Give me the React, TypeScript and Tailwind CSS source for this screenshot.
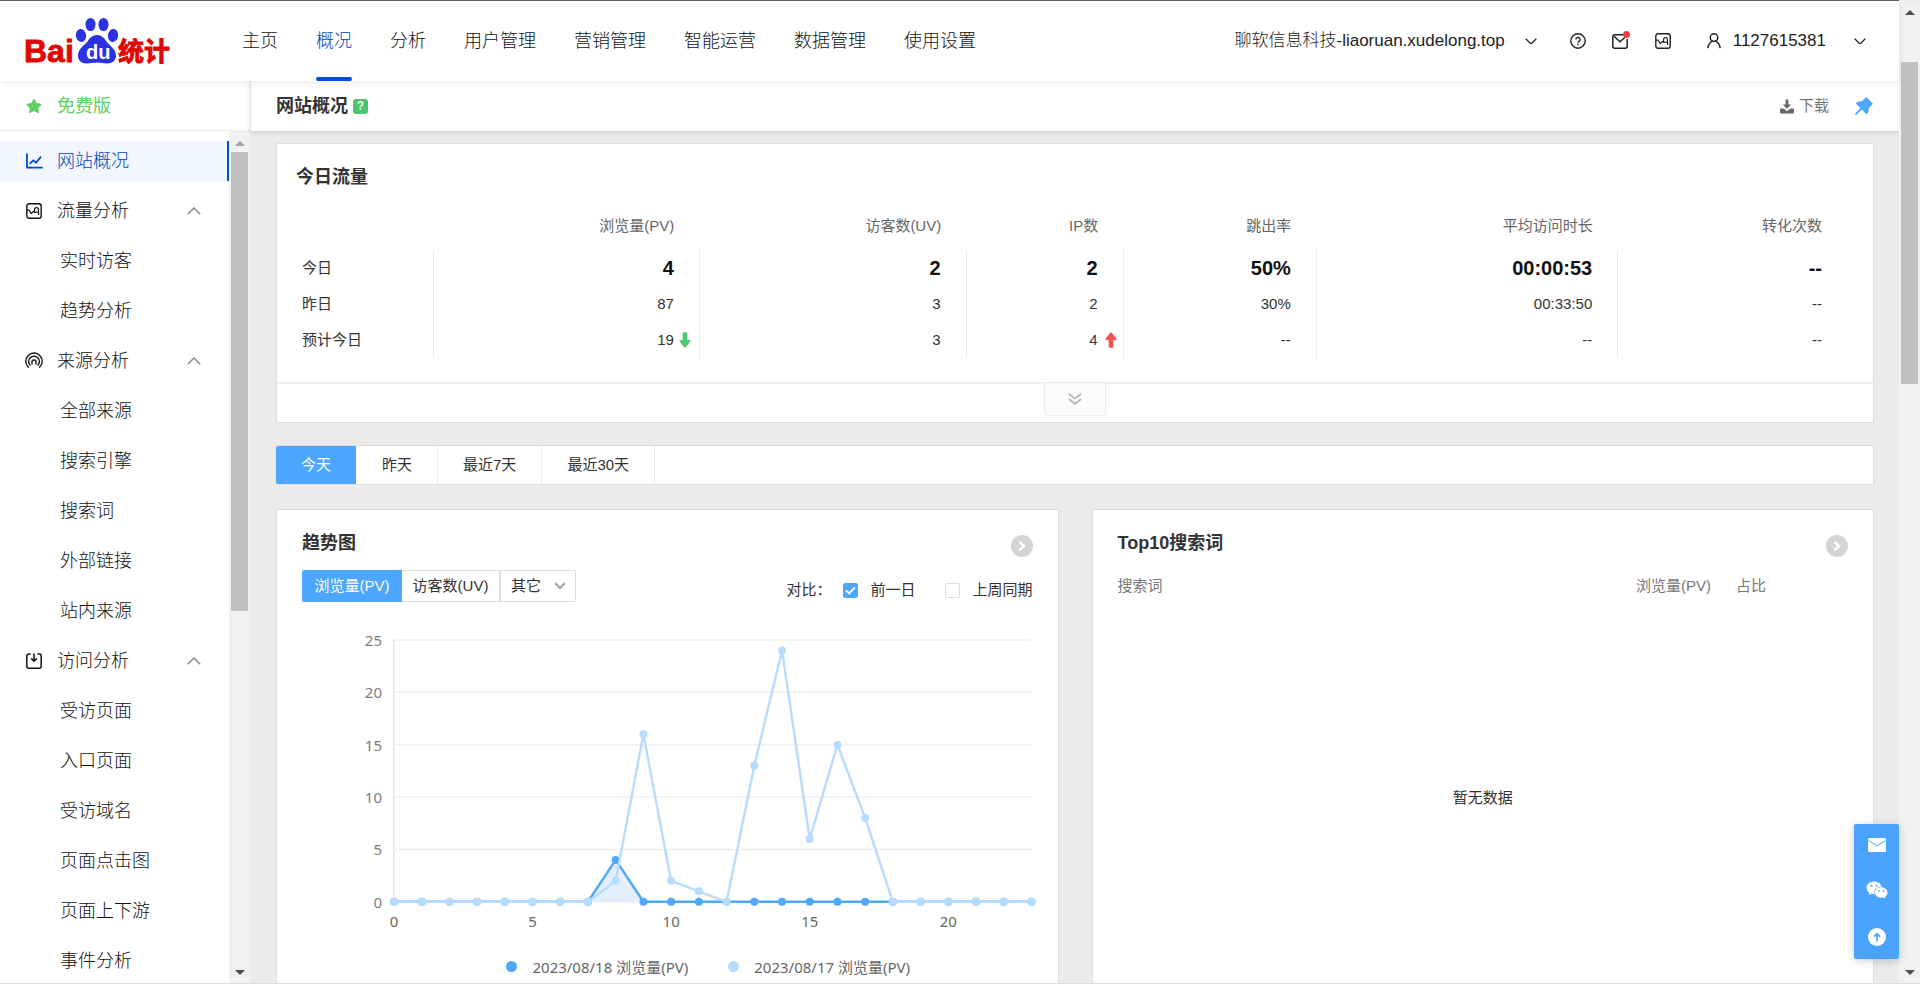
import { Fragment } from "react";
import type { ReactNode } from "react";
import { FaStar } from "react-icons/fa";
import { AiFillPushpin, AiFillWechat } from "react-icons/ai";

type TIconProps = {
  className?: string;
};

const navItems = [
  "主页",
  "概况",
  "分析",
  "用户管理",
  "营销管理",
  "智能运营",
  "数据管理",
  "使用设置",
];

const ChartBoxIcon = ({ className }: TIconProps) => (
  <svg viewBox="0 0 16 16" fill="none" stroke="currentColor" className={className}>
    <rect x="0.8" y="0.8" width="14.4" height="14.4" rx="2.2" strokeWidth="1.4" />
    <path
      d="M1 7.2h2.2l2 3.4 2.2-2.2 1.2 1 4-0.4v3M8.6 8.8V6.6a1.9 1.9 0 0 1 3.8 0v2.6"
      strokeWidth="1.2"
      strokeLinejoin="round"
    />
  </svg>
);

const LineChartIcon = ({ className }: TIconProps) => (
  <svg viewBox="0 0 17 17" fill="none" stroke="currentColor" strokeWidth="1.8" className={className}>
    <path d="M1 0.5v14.2h15.6" strokeLinejoin="round" />
    <path d="M3.6 10.8l3.6-3.4 2.8 2.4 5-6.2" />
  </svg>
);

const SourceIcon = ({ className }: TIconProps) => (
  <svg viewBox="0 0 18 18" fill="none" stroke="currentColor" strokeWidth="1.4" className={className}>
    <path d="M3.8 15.6a8.2 8.2 0 1 1 10.4 0" />
    <path d="M5.4 13.6a5.4 5.4 0 1 1 7.2 0" />
    <path d="M7 12.4v-1.8a2.1 2.1 0 1 1 4 0v1.8" />
  </svg>
);

const VisitIcon = ({ className }: TIconProps) => (
  <svg viewBox="0 0 16 16" fill="none" stroke="currentColor" strokeWidth="1.5" className={className}>
    <path d="M4.6 0.9H2.8a2 2 0 0 0-2 2v10.3a2 2 0 0 0 2 2h10.400a2 2 0 0 0 2-2V2.900a2 2 0 0 0-2-2h-1.800" />
    <path d="M8 0.4v7.4M5.2 5.4L8 8.2l2.8-2.8" />
  </svg>
);

const ChevronIcon = ({ className }: TIconProps) => (
  <svg viewBox="0 0 14 8" fill="none" stroke="currentColor" strokeWidth="1.5" className={className}>
    <path d="M0.8 0.8L7 7l6.2-6.2" />
  </svg>
);

const menus = [
  {
    title: "流量分析",
    icon: <ChartBoxIcon className="size-4" />,
    children: ["实时访客", "趋势分析"],
  },
  {
    title: "来源分析",
    icon: <SourceIcon className="size-[18px]" />,
    children: ["全部来源", "搜索引擎", "搜索词", "外部链接", "站内来源"],
  },
  {
    title: "访问分析",
    icon: <VisitIcon className="size-4" />,
    children: [
      "受访页面",
      "入口页面",
      "受访域名",
      "页面点击图",
      "页面上下游",
      "事件分析",
    ],
  },
];

const columns = [
  { title: "浏览量(PV)", today: "4", yesterday: "87", predict: "19", trend: "down" },
  { title: "访客数(UV)", today: "2", yesterday: "3", predict: "3" },
  { title: "IP数", today: "2", yesterday: "2", predict: "4", trend: "up" },
  { title: "跳出率", today: "50%", yesterday: "30%", predict: "--" },
  { title: "平均访问时长", today: "00:00:53", yesterday: "00:33:50", predict: "--" },
  { title: "转化次数", today: "--", yesterday: "--", predict: "--" },
];

const todayData = [0, 0, 0, 0, 0, 0, 0, 0, 4, 0, 0, 0, 0, 0, 0, 0, 0, 0, 0, 0, 0, 0, 0, 0];
const yesterdayData = [0, 0, 0, 0, 0, 0, 0, 0, 2, 16, 2, 1, 0, 13, 24, 6, 15, 8, 0, 0, 0, 0, 0, 0];

const Logo = () => (
  <svg viewBox="0 -6 150 64" className="h-16 w-[150px]" role="img" aria-label="百度统计">
    <text x="-1" y="47" fill="#e10602" className="font-['Liberation_Sans',sans-serif] text-[32px] font-bold" stroke="#e10602" strokeWidth="0.8">
      Bai
    </text>
    <g fill="#2a32e2">
      <ellipse cx="65.5" cy="9.5" rx="5" ry="6.6" />
      <ellipse cx="78.5" cy="9.5" rx="5" ry="6.6" />
      <ellipse cx="56" cy="20.5" rx="5.1" ry="6.6" transform="rotate(-8 56 20.5)" />
      <ellipse cx="88" cy="20.5" rx="5.1" ry="6.6" transform="rotate(8 88 20.5)" />
      <path d="M72 20c4.500 0 7.500 3 9.500 6.500 2 3.500 9.500 7 9.500 14 0 5-4 8-8.500 8-4 0-7-1-10.500-1s-6.500 1-10.500 1c-5 0-8.500-3-8.500-8 0-7 7-10.500 9.500-14C64.500 23 67.500 20 72 20z" />
    </g>
    <text x="61" y="44" fill="#fff" className="font-['Liberation_Sans',sans-serif] text-[20px] font-bold">
      du
    </text>
    <text x="93" y="46" fill="#e10602" stroke="#e10602" strokeWidth="0.8" className="font-['Noto_Sans_CJK_SC',sans-serif] text-[26px] font-bold">
      统计
    </text>
  </svg>
);

const Header = () => (
  <header className="relative z-10 flex h-[81px] shrink-0 items-center border-t border-[#606066] bg-white pr-[33px] pl-[25px] text-lg font-light text-[#111] shadow-[0_2px_6px_rgba(0,0,0,0.08)]">
    <a href="#" className="mr-[67px]">
      <Logo />
    </a>
    <nav className="flex h-full gap-[38px]">
      {navItems.map((item) => (
        <a
          key={item}
          href="#"
          className={
            item === "概况"
              ? "relative flex items-center text-[#0048c0] after:absolute after:inset-x-0 after:bottom-0 after:h-1 after:rounded-xs after:bg-[#0052cc]"
              : "flex items-center"
          }
        >
          {item}
        </a>
      ))}
    </nav>
    <div className="ml-auto flex items-center text-[17px] text-[#222]">
      <button type="button" className="flex items-center gap-5">
        聊软信息科技-liaoruan.xudelong.top
        <ChevronIcon className="w-3" />
      </button>
      <button type="button" aria-label="帮助" className="ml-[33px]">
        <svg viewBox="0 0 16 16" fill="none" stroke="currentColor" strokeWidth="1.4" className="size-4">
          <circle cx="8" cy="8" r="7.2" />
          <path d="M5.900 6.600a2.100 2.100 0 1 1 3.100 1.800c-.7.400-1 .7-1 1.400M8 10.800v1.500" />
        </svg>
      </button>
      <button type="button" aria-label="消息" className="relative ml-[26px]">
        <svg viewBox="0 0 16 16" fill="none" stroke="currentColor" strokeWidth="1.5" className="size-4">
          <path d="M11 1.800H2.800a2 2 0 0 0-2 2v9.400a2 2 0 0 0 2 2h10.400a2 2 0 0 0 2-2V6" />
          <path d="M2 3.200l6 5.600 5-4.600" />
        </svg>
        <span className="absolute -top-0.5 -right-0.5 size-[7px] rounded-full bg-[#f33e3e]" />
      </button>
      <button type="button" aria-label="报告" className="ml-[27px]">
        <ChartBoxIcon className="size-4" />
      </button>
      <button type="button" className="ml-9 flex items-center">
        <svg viewBox="0 0 14 16" fill="none" stroke="currentColor" strokeWidth="1.5" className="mr-3 h-4 w-3.5">
          <circle cx="7" cy="4.600" r="3.800" />
          <path d="M0.900 15.200c.4-3.600 2.200-5.800 4.600-7M13.100 15.200c-.4-3.600-2.200-5.800-4.600-7" />
        </svg>
        1127615381
        <ChevronIcon className="ml-7 w-3" />
      </button>
    </div>
  </header>
);

const Sidebar = () => (
  <aside className="flex w-[250px] shrink-0 flex-col bg-white text-lg font-light text-[#111]">
    <a href="#" className="flex h-[50px] shrink-0 items-center border-b border-[#ebebeb] font-normal text-[#5ed166]">
      <span className="flex w-[57px] justify-center pl-[11px]">
        <FaStar className="size-4" />
      </span>
      免费版
    </a>
    <div className="flex min-h-0 flex-1">
      <nav className="flex-1 overflow-hidden pt-2.5">
        <a href="#" className="mb-2.5 flex h-10 items-center border-r-2 border-[#0052cc] bg-[#f2f6fe] text-[#0048c0]">
          <span className="flex w-[57px] justify-center pl-[11px]">
            <LineChartIcon className="size-[17px]" />
          </span>
          网站概况
        </a>
        {menus.map((menu) => (
          <Fragment key={menu.title}>
            <button type="button" className="mb-2.5 flex h-10 w-full items-center">
              <span className="flex w-[57px] justify-center pl-[11px]">{menu.icon}</span>
              {menu.title}
              <ChevronIcon className="mr-7 ml-auto w-3.5 rotate-180 text-[#868b9a]" />
            </button>
            {menu.children.map((child) => (
              <a key={child} href="#" className="mb-2.5 flex h-10 items-center pl-[60px]">
                {child}
              </a>
            ))}
          </Fragment>
        ))}
      </nav>
      <div className="flex w-[21px] flex-col items-center justify-between bg-[#f1f1f1] pt-2.5 pb-2">
        <span className="border-x-[5px] border-b-[5px] border-transparent border-b-[#a3a3a3]" />
        <span className="mt-1.5 mb-auto h-[55%] w-[17px] bg-[#c1c1c1]" />
        <span className="border-x-[5px] border-t-[5px] border-transparent border-t-[#505050]" />
      </div>
    </div>
  </aside>
);

const TrendArrow = ({ trend }: { trend?: string }) => {
  if (!trend) return null;
  return (
    <svg
      viewBox="0 0 12 16"
      className={
        trend === "up"
          ? "absolute top-2.5 right-1.5 h-4 w-3 text-[#f5524c]"
          : "absolute top-2.5 right-2 h-4 w-3 rotate-180 text-[#4dc96d]"
      }
    >
      <path
        d="M5.300 0.800q.7-.7 1.400 0L11.300 6.600a.9.900 0 0 1-.7 1.500H8.300v6.300a1.300 1.300 0 0 1-1.300 1.300H5a1.300 1.300 0 0 1-1.300-1.300V8.100H1.400a.9.900 0 0 1-.7-1.500z"
        fill="currentColor"
      />
    </svg>
  );
};

const TodayTraffic = () => (
  <section className="border border-[#dedede] bg-white">
    <h2 className="px-[19px] pt-[19px] text-lg leading-7 font-bold text-[#333]">今日流量</h2>
    <div className="mt-3 mb-6 pr-[26px]">
      <table className="w-full table-fixed text-right text-[15px] text-[#333]">
        <colgroup>
          <col className="w-[10%]" />
          <col className="w-[16.9%]" />
          <col className="w-[17%]" />
          <col className="w-[10%]" />
          <col className="w-[12.3%]" />
          <col className="w-[19.2%]" />
          <col className="w-[14.6%]" />
        </colgroup>
        <thead>
          <tr className="h-[47px] text-[#666]">
            <td />
            {columns.map((col) => (
              <th key={col.title} scope="col" className="pr-[25px] font-normal">
                {col.title}
              </th>
            ))}
          </tr>
        </thead>
        <tbody className="[&_td]:border-r [&_td]:border-[#ebebeb] [&_td]:pr-[25px] [&_td:last-child]:border-0 [&_th]:border-r [&_th]:border-[#ebebeb] [&_th]:pl-[25px] [&_th]:text-left [&_th]:font-normal">
          <tr className="h-9">
            <th scope="row">今日</th>
            {columns.map((col) => (
              <td key={col.title} className="text-xl leading-7 font-bold text-[#111]">
                {col.today}
              </td>
            ))}
          </tr>
          <tr className="h-9">
            <th scope="row">昨日</th>
            {columns.map((col) => (
              <td key={col.title}>{col.yesterday}</td>
            ))}
          </tr>
          <tr className="h-9">
            <th scope="row">预计今日</th>
            {columns.map((col) => (
              <td key={col.title} className="relative">
                {col.predict}
                <TrendArrow trend={col.trend} />
              </td>
            ))}
          </tr>
        </tbody>
      </table>
    </div>
    <div className="flex h-10 items-start justify-center border-t-2 border-[#f0f0f0]">
      <button
        type="button"
        aria-label="展开"
        className="-mt-0.5 flex h-[34px] w-[62px] items-center justify-center rounded-b-sm border border-[#ebebeb] bg-[#fafcfc] text-[#b5b8ba]"
      >
        <svg viewBox="0 0 14 12" fill="none" stroke="currentColor" strokeWidth="1.8" className="h-3 w-3.5">
          <path d="M0.800 0.800L7 5.600l6.200-4.800M0.800 6L7 10.800 13.200 6" />
        </svg>
      </button>
    </div>
  </section>
);

const DateTabs = () => (
  <div className="mt-[22px] flex h-10 border-y border-r border-[#dedede] bg-white text-[15px] text-[#333]">
    {["今天", "昨天", "最近7天", "最近30天"].map((tab) => (
      <button
        key={tab}
        type="button"
        className={
          tab === "今天"
            ? "mr-px rounded-l-xs bg-[#4da6ff] px-[25px] text-white"
            : "border-r border-[#ebebeb] px-[25px]"
        }
      >
        {tab}
      </button>
    ))}
  </div>
);

const Card = ({ title, children }: { title: string; children: ReactNode }) => (
  <section className="flex min-h-[520px] flex-col rounded-xs border border-[#dedede] bg-white px-[25px] pt-[19px] pb-6">
    <div className="flex items-end justify-between">
      <h2 className="text-lg leading-7 font-bold text-[#333]">{title}</h2>
      <button type="button" aria-label="更多" className="flex size-[22px] items-center justify-center rounded-full bg-[#d3d4d6]">
        <svg viewBox="0 0 8 10" fill="none" stroke="#fff" strokeWidth="2.400" strokeLinecap="round" strokeLinejoin="round" className="h-2.5 w-2">
          <path d="M2 1.400L6 5 2 8.600" />
        </svg>
      </button>
    </div>
    {children}
  </section>
);

const getX = (i: number) => 92 + (i * 638) / 23;
const getY = (v: number) => 282 - (v * 262) / 25;
const getPoints = (data: number[]) => data.map((v, i) => `${getX(i)},${getY(v)}`).join(" ");

const TrendChart = () => (
  <svg viewBox="0 0 731 320" className="mt-[18px] w-full overflow-visible font-['Noto_Sans','Noto_Sans_CJK_SC',sans-serif] text-[15px]">
    {[25, 20, 15, 10, 5, 0].map((v) => (
      <Fragment key={v}>
        <path d={`M92 ${getY(v)}H730`} stroke="#f0f0f0" strokeWidth="1.500" />
        <text x="80" y={getY(v) + 6} textAnchor="end" fill="#7d7d7d">
          {v}
        </text>
      </Fragment>
    ))}
    <path d="M92 20V282" stroke="#e3e3e3" strokeWidth="1.500" />
    {[0, 5, 10, 15, 20].map((v) => (
      <text key={v} x={getX(v)} y="307" textAnchor="middle" fill="#666">
        {v}
      </text>
    ))}
    <polygon points={`${getX(7)},282 ${getX(8)},${getY(4)} ${getX(9)},282`} fill="#e3effc" />
    <polyline points={getPoints(todayData)} fill="none" stroke="#4fa8f9" strokeWidth="2.500" />
    {todayData.map((v, i) => (
      <circle key={i} cx={getX(i)} cy={getY(v)} r="4" fill="#4fa8f9" />
    ))}
    <polyline points={getPoints(yesterdayData)} fill="none" stroke="#b8dcff" strokeWidth="2.400" />
    {yesterdayData.map((v, i) => (
      <circle key={i} cx={getX(i)} cy={getY(v)} r="4" fill="#b8dcff" />
    ))}
  </svg>
);

const CompareBox = ({ id, label, checked }: { id: string; label: string; checked?: boolean }) => (
  <span className="flex items-center gap-3">
    <span className="relative flex size-[15px]">
      <input
        id={id}
        type="checkbox"
        defaultChecked={checked}
        className="peer size-[15px] appearance-none rounded-xs border border-[#dedede] bg-white checked:border-[#4da6ff] checked:bg-[#4da6ff]"
      />
      <svg
        viewBox="0 0 15 15"
        fill="none"
        stroke="#fff"
        strokeWidth="2"
        className="pointer-events-none absolute inset-0 hidden size-[15px] peer-checked:block"
      >
        <path d="M3 7.400l3 3 6-6" />
      </svg>
    </span>
    <label htmlFor={id}>{label}</label>
  </span>
);

const TrendCard = () => (
  <Card title="趋势图">
    <div className="mt-[13px] flex items-end justify-between text-[15px] text-[#333]">
      <div className="flex h-8">
        <button type="button" className="w-[100px] rounded-l-xs bg-[#4da6ff] text-white">
          浏览量(PV)
        </button>
        <button type="button" className="w-[98px] border-y border-r border-[#dedede]">
          访客数(UV)
        </button>
        <span className="relative">
          <select aria-label="其它指标" className="h-8 w-[76px] appearance-none rounded-r-xs border border-[#dedede] pl-2.5">
            <option>其它</option>
          </select>
          <svg
            viewBox="0 0 12 8"
            fill="none"
            stroke="#a8abad"
            strokeWidth="2.400"
            className="pointer-events-none absolute top-3 right-2.5 h-2 w-3"
          >
            <path d="M1 1l5 5 5-5" />
          </svg>
        </span>
      </div>
      <div className="flex items-center gap-[30px] leading-6">
        <span className="flex items-center gap-3">
          对比：
          <CompareBox id="prev-day" label="前一日" checked />
        </span>
        <CompareBox id="last-week" label="上周同期" />
      </div>
    </div>
    <TrendChart />
    <div className="mt-[15px] flex justify-center gap-10 pl-[82px] font-['Noto_Sans','Noto_Sans_CJK_SC',sans-serif] text-[15px] leading-6 text-[#666]">
      <span className="flex items-center gap-[15px]">
        <i className="size-[11px] rounded-full bg-[#4fa8f9]" />
        2023/08/18 浏览量(PV)
      </span>
      <span className="flex items-center gap-[15px]">
        <i className="size-[11px] rounded-full bg-[#b8dcff]" />
        2023/08/17 浏览量(PV)
      </span>
    </div>
  </Card>
);

const KeywordCard = () => (
  <Card title="Top10搜索词">
    <table className="mt-[17px] w-full text-[15px] leading-6 text-[#777]">
      <thead>
        <tr>
          <th scope="col" className="text-left font-normal">
            搜索词
          </th>
          <th scope="col" className="w-[100px] pr-[25px] text-right font-normal">
            浏览量(PV)
          </th>
          <th scope="col" className="w-[112px] text-left font-normal">
            占比
          </th>
        </tr>
      </thead>
      <tbody>
        <tr>
          <td colSpan={3} className="h-[400px] text-center text-[#333]">
            暂无数据
          </td>
        </tr>
      </tbody>
    </table>
  </Card>
);

const FloatTools = () => (
  <div className="absolute right-[21px] bottom-6 z-10 flex flex-col rounded-xs bg-[#4aa4ff] text-white shadow-[0_2px_8px_rgba(0,0,0,0.2)]">
    <button type="button" aria-label="邮件" className="flex h-[42px] w-[45px] items-center justify-center">
      <svg viewBox="0 0 18 14" className="h-3.5 w-[18px]">
        <rect width="18" height="14" rx="1.500" fill="#fff" />
        <path d="M0.500 2.500L9 7.800l8.500-5.300" fill="none" stroke="#4aa4ff" />
      </svg>
    </button>
    <button type="button" aria-label="微信" className="flex h-12 w-[45px] items-center justify-center">
      <AiFillWechat className="size-6" />
    </button>
    <button type="button" aria-label="回到顶部" className="flex size-[45px] items-center justify-center">
      <svg viewBox="0 0 18 18" className="size-[18px]">
        <circle cx="9" cy="9" r="9" fill="#fff" />
        <path d="M9 13.400V6M6 8.600l3-3 3 3" fill="none" stroke="#4aa4ff" strokeWidth="1.600" />
      </svg>
    </button>
  </div>
);

const App = () => {
  return (
    <div className="relative flex h-screen overflow-hidden border-b border-[#dcdcdc] bg-[#ebebeb] font-['Liberation_Sans','Noto_Sans_CJK_SC',sans-serif]">
      <div className="flex min-w-0 flex-1 flex-col">
        <Header />
        <div className="flex min-h-0 flex-1">
          <Sidebar />
          <main className="flex min-w-0 flex-1 flex-col">
            <div className="flex h-[50px] shrink-0 items-center border-l border-[#e0e0e0] bg-white pr-[23px] pl-[25px] shadow-[0_1px_5px_rgba(0,0,0,0.15)]">
              <h1 className="text-lg font-bold text-[#333]">网站概况</h1>
              <span className="ml-[5px] flex size-[15px] items-center justify-center rounded-[3px] bg-[#4dc470] text-xs font-bold text-[#e3f6e8]">
                ?
              </span>
              <button type="button" className="ml-auto flex items-center gap-[5px] text-[15px] text-[#777]">
                <svg viewBox="0 0 14 15" fill="#666" className="h-[15px] w-3.5">
                  <path d="M5.600 0.500h2.800v5h2.800L7 9.800 2.800 5.500h2.800z" />
                  <path d="M1.200 9.500h2.300L7 12.200l3.500-2.700h2.300q1.200 0 1.200 1.200v2.600q0 1.200-1.200 1.200H1.200Q0 14.500 0 13.300v-2.600q0-1.200 1.200-1.200z" />
                </svg>
                下载
              </button>
              <button type="button" aria-label="固定" className="ml-[23px] text-[#4da6ff]">
                <AiFillPushpin className="size-6" />
              </button>
            </div>
            <div className="min-h-0 flex-1 overflow-hidden pt-3 pr-[25px] pl-[26px]">
              <TodayTraffic />
              <DateTabs />
              <div className="mt-6 grid grid-cols-2 gap-[33px]">
                <TrendCard />
                <KeywordCard />
              </div>
            </div>
          </main>
        </div>
      </div>
      <div className="mt-px flex w-[21px] shrink-0 flex-col items-center bg-[#f1f1f1] pt-[9px] pb-2">
        <span className="border-x-[5px] border-b-[5px] border-transparent border-b-[#505050]" />
        <span className="mt-[47px] mb-auto h-1/3 w-[17px] bg-[#c1c1c1]" />
        <span className="border-x-[5px] border-t-[5px] border-transparent border-t-[#505050]" />
      </div>
      <FloatTools />
    </div>
  );
};

export default App;
